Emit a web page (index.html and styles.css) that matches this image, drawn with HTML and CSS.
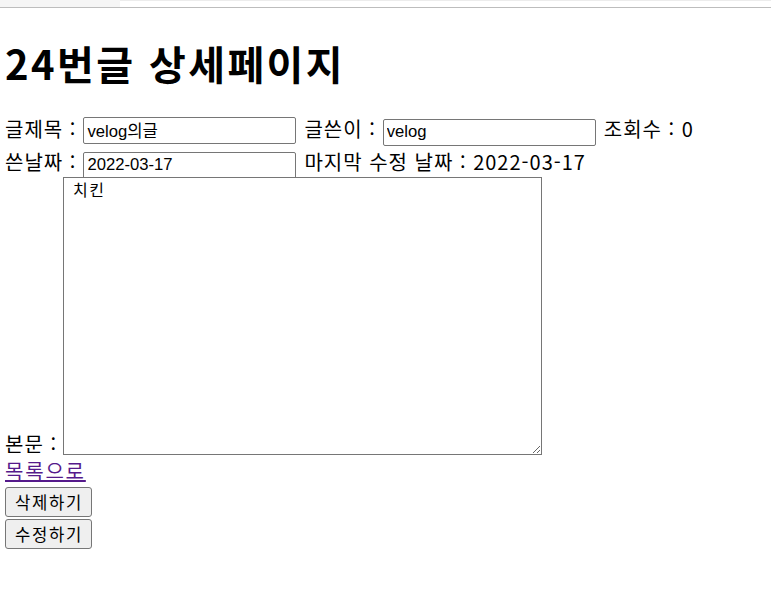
FILE: index.html
```html
<!DOCTYPE html>
<html lang="ko">
  <head>
    <meta charset="UTF-8" />
    <meta name="viewport" content="width=device-width, initial-scale=1.0" />
    <title>24번글 상세페이지</title>
    <link rel="stylesheet" href="styles.css">
  </head>
  <body>
    <div class="tab-strip">
      <div class="tab-strip-left"></div>
    </div>

    <div class="detail">
      <h1 class="title">24번글 상세페이지</h1>

      <div class="row">
        <label class="label">글제목 :</label>
        <input class="field" type="text" value="velog의글" />
        <label class="label">글쓴이 :</label>
        <input class="field" type="text" value="velog" />
        <span class="label">조회수 : 0</span>
      </div>

      <div class="row">
        <label class="label">쓴날짜 :</label>
        <input class="field" type="text" value="2022-03-17" />
        <span class="label">마지막 수정 날짜 : 2022-03-17</span>
      </div>

      <div class="content-row">
        <label class="label content-label">본문 :</label>
        <textarea class="content">치킨</textarea>
      </div>

      <a class="back-link" href="#">목록으로</a>
      <button class="btn" type="button">삭제하기</button>
      <button class="btn" type="button">수정하기</button>
    </div>
  </body>
</html>
```

FILE: styles.css
```css
:root {
  --black: #000000;
  --white: #ffffff;
  --border-gray: #767676;
  --button-gray: #efefef;
  --visited: #551a8b;
  --base: 20px;
  --small: 16.67px;
}
body {
  margin: 0;
  background: var(--white);
  color: var(--black);
  font-family: "Noto Sans CJK KR", "Noto Sans", sans-serif;
  font-size: var(--base);
}
.tab-strip {
  display: flex;
  height: 6px;
  border-top: 1px solid #ececec;
  border-bottom: 1px solid #bdbdbd;
  background-color: var(--white);
}
.tab-strip-left {
  width: 120px;
  margin-top: -1px;
  background-color: #f5f5f5;
}
.detail {
  padding: 0 5px;
}
.title {
  margin: 31px 0 24px;
  font-size: 40px;
  line-height: 48px;
  font-weight: bold;
  letter-spacing: 0.06em;
}
.row {
  display: flex;
  align-items: baseline;
  column-gap: 6px;
  height: 33px;
  padding-top: 5px;
  box-sizing: border-box;
}
.label {
  line-height: 26px;
  letter-spacing: 0.05em;
  white-space: nowrap;
}
.field {
  width: 213px;
  height: 27px;
  box-sizing: border-box;
  margin: 0 2px 0 1px;
  padding: 1px 3px;
  border: 1px solid var(--border-gray);
  border-radius: 2px;
  font-family: "Liberation Sans", "Noto Sans CJK KR", sans-serif;
  font-size: var(--small);
  color: var(--black);
}
.content-row {
  display: flex;
  align-items: flex-end;
  column-gap: 6px;
}
.content-label {
  margin-bottom: 4px;
}
.content {
  width: 479px;
  height: 278px;
  box-sizing: border-box;
  margin: 0 0 6px;
  padding: 1px 9px;
  border: 1px solid var(--border-gray);
  border-radius: 0;
  resize: vertical;
  font-family: "Noto Sans CJK KR", sans-serif;
  font-size: 16px;
  line-height: 20px;
  letter-spacing: 0.1em;
  color: var(--black);
}
.back-link {
  display: block;
  width: max-content;
  height: 26px;
  line-height: 20px;
  letter-spacing: 0.09em;
  color: var(--visited);
}
.btn {
  display: block;
  height: 30px;
  margin: 0 0 2px;
  padding: 0 8px 0 9px;
  border: 1px solid var(--border-gray);
  border-radius: 3px;
  background-color: var(--button-gray);
  font-family: "Noto Sans CJK KR", sans-serif;
  font-size: var(--small);
  letter-spacing: 0.1em;
  color: var(--black);
}
```
